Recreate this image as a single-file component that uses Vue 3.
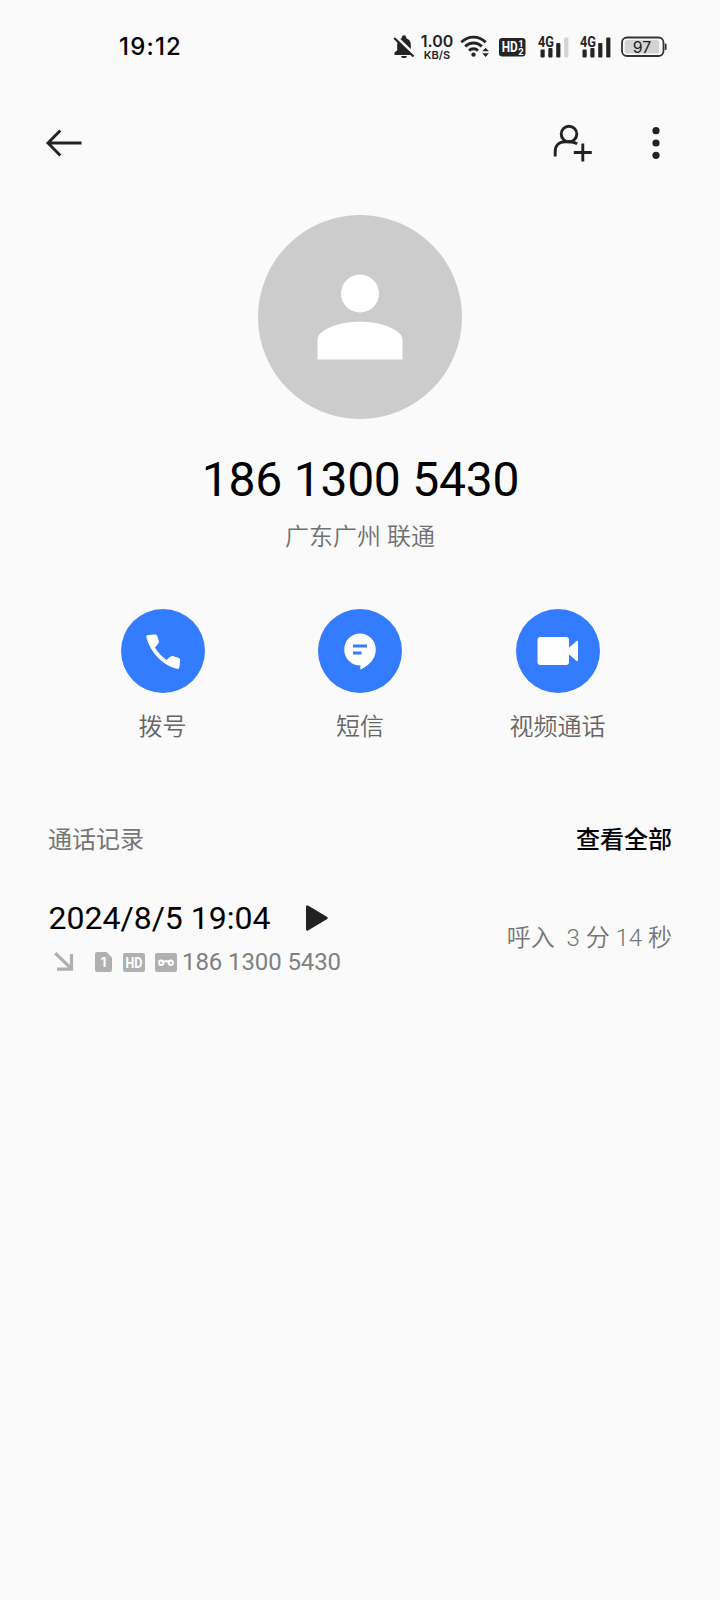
<script setup>
const signals = [
  { id: 1, weak: true },
  { id: 2, weak: false },
]
const actions = [
  { id: 'call', label: '拨号' },
  { id: 'sms', label: '短信' },
  { id: 'video', label: '视频通话' },
]
</script>

<template>
  <div class="screen">
    <header class="status">
      <span class="clock">19:12</span>
      <div class="status-icons">
        <svg class="bell" width="22" height="24" viewBox="0 0 22 24">
          <path d="M1.500 20v-2.400l2.700-2.300V9.600C4.200 6.300 6 4 8.800 3.200V2.500a2.200 2.200 0 0 1 4.400 0v.7c2.900.8 4.600 3.300 4.600 6.400v5.700l2.700 2.300V20z" fill="#242424" />
          <path d="M8.200 21h5.600a2.800 2 0 0 1-5.600 0z" fill="#242424" />
          <path d="M3 2.200L21.500 20" stroke="#fafafa" stroke-width="3.500" />
          <path d="M1.200 3L20.500 21.500" stroke="#242424" stroke-width="2.200" />
        </svg>
        <div class="speed">
          <span class="speed-value">1.00</span>
          <span class="speed-unit">KB/S</span>
        </div>
        <svg class="wifi" width="30" height="24" viewBox="0 0 30 24">
          <g fill="none" stroke="#242424" stroke-width="2.900">
            <path d="M1.300 7.300a17 17 0 0 1 24.400 0" />
            <path d="M5.200 11.600a11.500 11.500 0 0 1 16.600 0" />
            <path d="M9.100 15.600a6.300 6.300 0 0 1 8.800 0" />
          </g>
          <circle cx="13.500" cy="19.600" r="2.200" fill="#242424" />
          <path d="M22.300 16.300l3.300-3.600 3.300 3.600zM22.300 18.300h6.600l-3.300 3.600z" fill="#242424" />
        </svg>
        <svg class="hd" width="27" height="19" viewBox="0 0 27 19">
          <rect width="26.500" height="18.500" rx="3.200" fill="#242424" />
          <g fill="#fff" font-family="Roboto, sans-serif" font-weight="700">
            <text x="2.800" y="14.400" font-size="14.500" textLength="16" lengthAdjust="spacingAndGlyphs">HD</text>
            <text x="19.200" y="9" font-size="9.500">1</text>
            <text x="19.200" y="17" font-size="9.500">2</text>
          </g>
        </svg>
        <svg v-for="s in signals" :key="s.id" class="signal" width="32" height="24" viewBox="0 0 32 24">
          <text x="0" y="11.500" font-family="Roboto, sans-serif" font-weight="700" font-size="14" textLength="16" lengthAdjust="spacingAndGlyphs" fill="#242424">4G</text>
          <g fill="#242424">
            <rect x="2.500" y="14.500" width="4.200" height="8" rx="1" />
            <rect x="10.300" y="13" width="4.200" height="9.500" rx="1" />
            <rect x="18.200" y="8" width="4.200" height="14.500" rx="1" />
          </g>
          <rect x="26.200" y="2.500" width="4.200" height="20" rx="1" :fill="s.weak ? '#d4d4d4' : '#242424'" />
        </svg>
        <svg class="battery" width="46" height="22" viewBox="0 0 46 22">
          <rect x="1" y="1.500" width="41.500" height="18.500" rx="5" fill="#fafafa" stroke="#333" stroke-width="1.800" />
          <rect x="3.700" y="4" width="34.500" height="13.500" rx="2.500" fill="#d3d3d3" />
          <path d="M43.800 7.500h.6q1.200 0 1.200 1.200v4q0 1.200-1.200 1.200h-.6z" fill="#333" />
          <text x="21" y="16.500" text-anchor="middle" font-family="Inter, sans-serif" font-size="15.500" textLength="18.500" lengthAdjust="spacingAndGlyphs" fill="#222">97</text>
        </svg>
      </div>
    </header>

    <nav class="toolbar">
      <svg width="38" height="32" viewBox="0 0 38 32">
        <path d="M15.300 3.500L3 16l12.300 12.500M3 16h33.500" fill="none" stroke="#222" stroke-width="2.900" />
      </svg>
      <div class="tools">
        <svg width="42" height="40" viewBox="0 0 42 40" fill="none" stroke="#222" stroke-width="2.900">
          <circle cx="17" cy="11" r="7.800" />
          <path d="M3.200 33.500v-5.200c0-6 4-9.600 10-9.600h4c3.200 0 5.700.8 8 2" />
          <path d="M30.800 20.500v18M21.800 29.500h18" />
        </svg>
        <svg width="10" height="34" viewBox="0 0 10 34" fill="#222">
          <circle cx="5" cy="4.700" r="3.600" />
          <circle cx="5" cy="17" r="3.600" />
          <circle cx="5" cy="29.300" r="3.600" />
        </svg>
      </div>
    </nav>

    <section class="profile">
      <svg class="avatar" width="204" height="204" viewBox="0 0 204 204">
        <circle cx="102" cy="102" r="102" fill="#ccc" />
        <circle cx="102" cy="78.500" r="19" fill="#fff" />
        <path d="M59.500 144.500v-18.500c0-4.300 1.800-7.500 6-10 9-6 22-9.500 36.500-9.500s27.500 3.500 36.500 9.500c4.200 2.500 6 5.700 6 10v18.500z" fill="#fff" />
      </svg>
      <h1 class="number">186 1300 5430</h1>
      <p class="place">广东广州 联通</p>
    </section>

    <section class="actions">
      <div v-for="a in actions" :key="a.id" class="action">
        <svg width="84" height="84" viewBox="0 0 84 84">
          <circle cx="42" cy="42" r="42" fill="#347cff" />
          <path v-if="a.id === 'call'" d="M27.300 26l6.200-.5c1.500-.1 2.400.5 2.900 1.900l1.300 4c.4 1.400.2 2.600-.8 3.700l-3 3.400c3 4.900 6.700 8.900 11.700 12.600l3.200-3.100c1.100-1 2.300-1.200 3.700-.8l4.800 1.600c1.400.5 2 1.500 1.800 2.900l-.7 6.200c-.2 1.500-1.200 2.200-2.600 1.800-6.800-1.700-12.500-4.900-18.300-10.500C31.500 43.200 27.500 36.300 25.400 28.600c-.4-1.500.4-2.500 1.900-2.600z" fill="#fff" />
          <template v-else-if="a.id === 'sms'">
            <path d="M42 24.500a16 16 0 0 1 15.800 16c0 9-5.800 15.500-15.400 20.200v-4.200a16 16 0 0 1-.4-32z" fill="#fff" />
            <path d="M35 35.500h14v3h-14zM35 42.500h8.500v3h-8.500z" fill="#347cff" />
          </template>
          <g v-else fill="#fff">
            <rect x="21.500" y="28" width="31.500" height="28" rx="3" />
            <path d="M52 39.500l8-7q2-1.500 2 .5v18q0 2-2 .5l-8-7z" />
          </g>
        </svg>
        <span class="label">{{ a.label }}</span>
      </div>
    </section>

    <section class="history">
      <div class="history-head">
        <span class="head-title">通话记录</span>
        <span class="head-more">查看全部</span>
      </div>
      <div class="record">
        <div class="record-main">
          <div class="record-time">
            <span>2024/8/5 19:04</span>
            <svg width="24" height="28" viewBox="0 0 24 28">
              <path d="M1 3v22q0 2.800 2.400 1.300l18.400-11q2-1.300 0-2.600L3.400 1.700Q1 .2 1 3z" fill="#222" />
            </svg>
          </div>
          <div class="record-detail">
            <svg class="incoming" width="20" height="20" viewBox="0 0 20 20">
              <path d="M1.200 1.200l16 15.300M17.500 2v15.200H3" fill="none" stroke="#b0b0b0" stroke-width="3.200" />
            </svg>
            <svg class="sim" width="18" height="20" viewBox="0 0 18 20">
              <path d="M2 0h9.500L17 5.500V18q0 2-2 2H2q-2 0-2-2V2q0-2 2-2z" fill="#b0b0b0" />
              <text x="8.500" y="15.300" text-anchor="middle" font-family="Inter, sans-serif" font-weight="700" font-size="13" fill="#fff">1</text>
            </svg>
            <svg class="hd-tag" width="22" height="19" viewBox="0 0 22 19">
              <rect width="22" height="19" rx="2" fill="#b0b0b0" />
              <text x="2.500" y="14.500" font-family="Roboto, sans-serif" font-weight="700" font-size="14" textLength="17" lengthAdjust="spacingAndGlyphs" fill="#fff">HD</text>
            </svg>
            <svg class="tape" width="22" height="19" viewBox="0 0 22 19">
              <rect width="22" height="19" rx="2" fill="#b0b0b0" />
              <g fill="none" stroke="#fff" stroke-width="2">
                <circle cx="6.200" cy="9.700" r="2.200" />
                <circle cx="15.800" cy="9.700" r="2.200" />
                <path d="M6.200 8.300h9.600" />
              </g>
            </svg>
            <span class="record-number">186 1300 5430</span>
          </div>
        </div>
        <span class="duration">呼入&nbsp; 3 分 14 秒</span>
      </div>
    </section>
  </div>
</template>

<style>
body {
  background: #fafafa;
}
</style>

<style scoped>
.screen {
  box-sizing: border-box;
  width: 720px;
  height: 1600px;
  background: #fafafa;
  color: #000;
  font-family: Roboto, "Noto Sans CJK SC", sans-serif;
  overflow: hidden;
}
.status {
  display: flex;
  align-items: center;
  justify-content: space-between;
  height: 94px;
  padding: 0 53px 0 119px;
}
.clock {
  font: 500 24px/30px Inter, sans-serif;
  letter-spacing: 1.2px;
}
.status-icons {
  display: flex;
  align-items: center;
  color: #242424;
}
.bell {
  margin-right: 6px;
}
.speed {
  display: flex;
  flex-direction: column;
  align-items: center;
  width: 32px;
  font-family: Inter, sans-serif;
  font-weight: 600;
  margin-right: 7px;
}
.speed-value {
  font-size: 16px;
  line-height: 15px;
}
.speed-unit {
  font-size: 11px;
  line-height: 12px;
}
.wifi {
  margin-right: 9px;
}
.hd {
  margin: 1px 12px 0 0;
}
.signal {
  margin-right: 10px;
}
.battery {
  margin-left: -1px;
}
.toolbar {
  display: flex;
  align-items: center;
  justify-content: space-between;
  height: 98px;
  padding: 0 59px 0 45px;
}
.tools {
  display: flex;
  align-items: center;
  gap: 57px;
}
.profile {
  display: flex;
  flex-direction: column;
  align-items: center;
  padding-top: 22.500px;
}
.avatar {
  display: block;
}
.number {
  margin: 33.500px 0 0;
  font-size: 48px;
  line-height: 56px;
  font-weight: 400;
  letter-spacing: -0.25px;
  text-indent: 1px;
}
.place {
  margin: 13px 0 0;
  font-size: 24px;
  line-height: 32px;
  font-weight: 350;
  color: #707070;
}
.actions {
  display: flex;
  justify-content: space-between;
  padding: 56px 64px 0;
}
.action {
  display: flex;
  flex-direction: column;
  align-items: center;
  width: 197px;
}
.label {
  margin-top: 18px;
  font-size: 24px;
  line-height: 32px;
  font-weight: 350;
  color: #666;
}
.history {
  padding: 81px 48px 0;
}
.history-head {
  display: flex;
  justify-content: space-between;
  font-size: 24px;
  line-height: 32px;
}
.head-title {
  color: #757575;
}
.head-more {
  font-weight: 500;
}
.record {
  display: flex;
  justify-content: space-between;
  align-items: center;
  margin-top: 42px;
}
.record-time {
  display: flex;
  align-items: center;
  gap: 35px;
  font-size: 32px;
  line-height: 40px;
  padding-left: 0.5px;
}
.record-time svg {
  margin-bottom: 1px;
}
.record-detail {
  display: flex;
  align-items: center;
  margin-top: 8px;
  padding-left: 6px;
  font-size: 24px;
  line-height: 32px;
  color: #808080;
}
.record-number {
  letter-spacing: -0.1px;
}
.incoming {
  margin-right: 21px;
}
.sim {
  margin-right: 10px;
}
.hd-tag {
  margin-right: 10px;
}
.tape {
  margin-right: 5px;
}
.duration {
  font-size: 24px;
  line-height: 32px;
  font-weight: 350;
  color: #757575;
}
</style>
